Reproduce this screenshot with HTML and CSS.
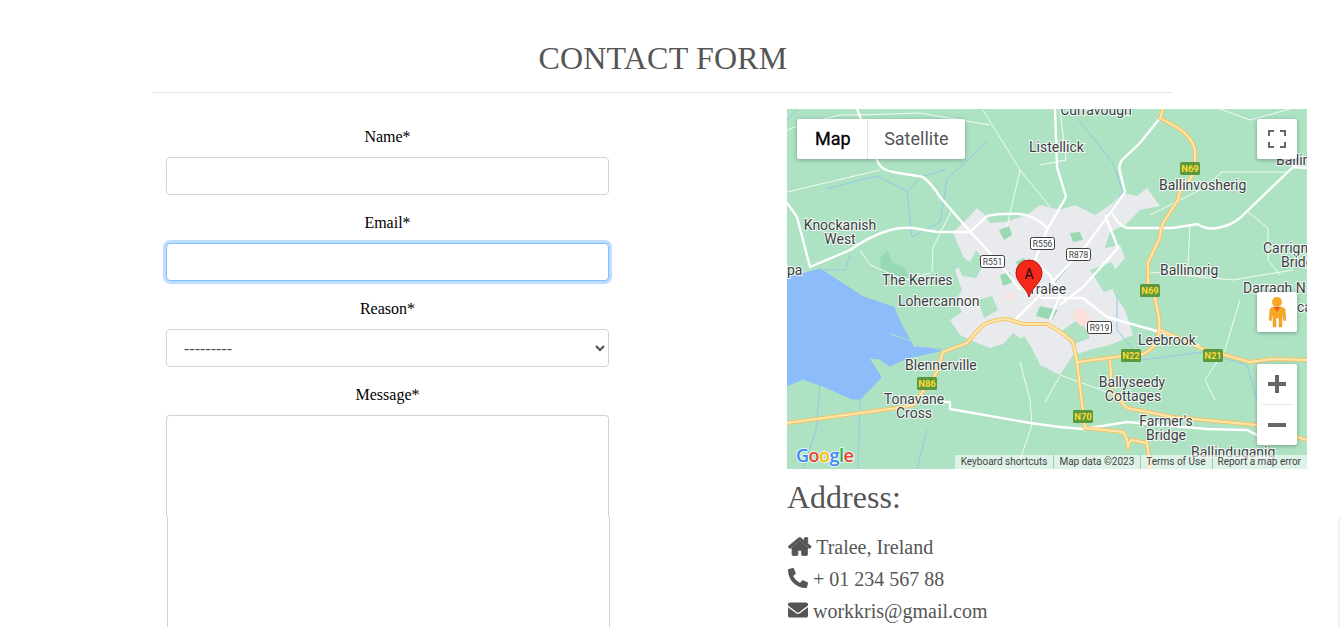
FILE: index.html
```html
<!DOCTYPE html>
<html lang="en">
<head>
    <meta charset="UTF-8">
    <meta name="viewport" content="width=device-width, initial-scale=1.0">
    <title>Contact Form</title>
    <link rel="stylesheet" href="styles.css">
</head>
<body>
    <div class="page">
        <header class="title-block">
            <h1>CONTACT FORM</h1>
        </header>
        <div class="contact-row">
            <form class="contact-form">
                <label for="name">Name*</label>
                <input type="text" id="name" class="field">
                <label for="email">Email*</label>
                <input type="email" id="email" class="field field-focus">
                <label for="reason">Reason*</label>
                <select id="reason" class="field field-select">
                    <option>---------</option>
                </select>
                <label for="message">Message*</label>
                <textarea id="message" class="field field-message"></textarea>
                <div class="message-rest"></div>
            </form>
            <div class="contact-info">
                <div class="map">
                    <svg class="map-canvas" viewBox="787 109 520 360" width="520" height="360">
                        <rect x="787" y="109" width="520" height="360" fill="#ade2c3"/>
                        <!-- town -->
                        <path class="town" d="M953 232L966 220L977 208L984 214L990 223L1005 222L1027 215L1040 205L1060 210L1075 205L1095 215L1110 205L1123 193L1137 196L1147 188L1160 206L1140 210L1125 225L1110 232L1105 248L1120 245L1125 258L1108 278L1115 295L1125 310L1133 335L1110 345L1090 350L1073 355L1060 375L1040 365L1030 345L1013 333L1003 344L990 348L975 342L960 335L950 320L962 312L956 300L962 290L955 270L966 262L958 245Z"/>
                        <path class="park" d="M880 258L888 250L892 262L905 268L908 276L890 278L881 272Z"/>
                        <path class="park" d="M999 230L1009 226L1012 235L1004 240Z"/>
                        <path class="park" d="M1070 233L1080 232L1083 240L1073 242Z"/>
                        <path class="park" d="M1016 262L1024 258L1030 268L1020 272Z"/>
                        <path class="park" d="M1040 306L1058 310L1052 320L1036 316Z"/>
                        <path class="park" d="M1000 275L1010 272L1013 282L1003 286Z"/>
                        <path class="gap" d="M953 250L970 262L976 250L985 262L976 278L962 276ZM978 300L992 296L998 310L984 318ZM1090 270L1112 262L1122 285L1104 292ZM1012 345L1024 336L1030 345L1040 365L1020 352ZM1080 318L1060 332L1072 345L1090 338Z"/>
                        <path class="pink" d="M1073 311L1083 307L1092 320L1082 327L1074 320Z"/>
                        <path class="pink" d="M1005 292L1014 294L1012 300L1006 298Z"/>
                        <!-- water -->
                        <path class="water" d="M787 279L820 270L843 285L863 298L893 308L902 328L913 348L940 350L907 357L890 365L880 358L867 357L880 377L860 398L852 398L823 385L803 378L787 385Z"/>
                        <path class="sandbar" d="M890 334L940 350"/>
                        <!-- rivers -->
                        <path class="river" d="M826 189L877 176L907 191L912 237L940 222L947 179L988 141M908 191L920 177L945 170M1077 118L1113 163L1123 192L1083 250L1040 300M860 400L858 469M820 385L816 430L803 469M927 430L917 469M1117 295L1117 330L1142 360L1203 352L1247 365L1257 400M787 120L797 110M850 255L845 270L820 270"/>
                        <!-- small roads -->
                        <path class="road-small" d="M983 110L1020 170L1050 207M787 192L880 170M1020 170L1007 227M952 210L933 247L932 273M787 130L800 125L840 115L857 115L920 113L990 125M1222 172L1287 172M1248 212L1268 228L1268 260L1280 275M1190 225L1188 265M1150 272L1233 280L1293 270M1020 362L1030 400L1032 425L1020 460M1222 172L1200 190L1180 200L1150 215M1060 109L1066 160L1040 165M1240 300L1225 350M1215 400L1205 380L1225 350M1115 395L1060 375M860 250L870 265L905 280L930 273M1045 402L1060 376M1290 109L1250 120L1220 109"/>
                        <!-- main roads -->
                        <path class="road" d="M857 109L877 160Q880 170 893 172L923 177Q932 184 940 197L967 228L987 250L1005 270L1020 290M787 203L797 217L810 267L850 250Q870 236 890 230Q902 227 913 228L937 232L970 232L987 216Q1000 213 1020 214Q1036 216 1047 228M1055 109L1057 167L1066 197L1047 230L1035 260M1125 192L1083 250L1040 295L1015 320M1160 118L1140 143L1122 160Q1118 166 1120 172L1125 192M1112 213Q1118 225 1127 228L1173 228L1197 224Q1207 230 1217 228Q1230 226 1240 218L1293 167L1307 168M1105 215L1118 248L1083 287L1060 305M1040 298L1083 298L1107 317L1160 332L1200 346M943 402L950 402L950 409L1030 423L1060 427L1083 429L1127 422L1207 429L1247 430L1267 440M1035 262L1050 275L1060 295L1050 320"/>
                        <!-- motorways -->
                        <g fill="none" stroke-linejoin="round">
                            <path class="motorway-edge" d="M1163 109L1160 118L1178 128Q1192 137 1195 150L1195 170Q1190 182 1180 190L1178 200Q1170 212 1163 223Q1160 230 1160 237L1148 263L1148 283Q1153 290 1155 298L1159 318Q1160 332 1157 342Q1150 352 1140 355L1123 356L1078 362M1160 330L1203 349L1250 362L1273 359L1307 360M787 423L897 408L913 405L937 372L943 352L967 343Q975 333 983 325Q995 319 1007 319L1023 324L1047 324Q1062 332 1073 342L1077 362L1085 428L1123 432Q1128 438 1128 448Q1128 442 1132 440L1147 443L1150 465L1150 469M1110 360L1112 392L1127 408L1173 417L1257 425L1307 440"/>
                            <path class="motorway" d="M1163 109L1160 118L1178 128Q1192 137 1195 150L1195 170Q1190 182 1180 190L1178 200Q1170 212 1163 223Q1160 230 1160 237L1148 263L1148 283Q1153 290 1155 298L1159 318Q1160 332 1157 342Q1150 352 1140 355L1123 356L1078 362M1160 330L1203 349L1250 362L1273 359L1307 360M787 423L897 408L913 405L937 372L943 352L967 343Q975 333 983 325Q995 319 1007 319L1023 324L1047 324Q1062 332 1073 342L1077 362L1085 428L1123 432Q1128 438 1128 448Q1128 442 1132 440L1147 443L1150 465L1150 469M1110 360L1112 392L1127 408L1173 417L1257 425L1307 440"/>
                        </g>
                        <!-- place names -->
                        <g class="places">
                            <text x="1096" y="115" text-anchor="middle">Curravough</text>
                            <text x="1029" y="152">Listellick</text>
                            <text x="840" y="230" text-anchor="middle">Knockanish</text>
                            <text x="840" y="244" text-anchor="middle">West</text>
                            <text x="1159" y="190">Ballinvosherig</text>
                            <text x="1276" y="165">Ballin</text>
                            <text x="1263" y="253">Carrign</text>
                            <text x="1281" y="267">Bridg</text>
                            <text x="1160" y="275">Ballinorig</text>
                            <text x="1243" y="293">Darragh N</text>
                            <text x="1297" y="312">cal</text>
                            <text x="882" y="285">The Kerries</text>
                            <text x="898" y="306">Lohercannon</text>
                            <text x="787" y="275">pa</text>
                            <text x="1028" y="294">Tralee</text>
                            <text x="905" y="370">Blennerville</text>
                            <text x="914" y="404" text-anchor="middle">Tonavane</text>
                            <text x="914" y="418" text-anchor="middle">Cross</text>
                            <text x="1138" y="345">Leebrook</text>
                            <text x="1132" y="387" text-anchor="middle">Ballyseedy</text>
                            <text x="1133" y="401" text-anchor="middle">Cottages</text>
                            <text x="1166" y="426" text-anchor="middle">Farmer's</text>
                            <text x="1166" y="440" text-anchor="middle">Bridge</text>
                            <text x="1191" y="457">Ballinduganig</text>
                        </g>
                        <!-- road shields -->
                        <g class="shield-white">
                            <rect x="980.5" y="255.5" width="24" height="12" rx="2"/><text x="992.5" y="265">R551</text>
                            <rect x="1030.5" y="237.5" width="24" height="12" rx="2"/><text x="1042.5" y="247">R556</text>
                            <rect x="1066.5" y="248.5" width="24" height="12" rx="2"/><text x="1078.5" y="258">R878</text>
                            <rect x="1087.5" y="321.5" width="24" height="12" rx="2"/><text x="1099.5" y="331">R919</text>
                        </g>
                        <g class="shield-green">
                            <rect x="1180" y="162" width="20" height="13" rx="1.5"/><text x="1190" y="172">N69</text>
                            <rect x="1140" y="284" width="20" height="13" rx="1.5"/><text x="1150" y="294">N69</text>
                            <rect x="1121" y="349" width="20" height="13" rx="1.5"/><text x="1131" y="359">N22</text>
                            <rect x="1203" y="349" width="20" height="13" rx="1.5"/><text x="1213" y="359">N21</text>
                            <rect x="1073" y="410" width="20" height="13" rx="1.5"/><text x="1083" y="420">N70</text>
                            <rect x="917" y="377" width="20" height="13" rx="1.5"/><text x="927" y="387">N86</text>
                        </g>
                        <!-- marker -->
                        <path class="marker" d="M1029 297C1027 288 1016 283 1016 273A13 13 0 0 1 1042 273C1042 283 1031 288 1029 297Z"/>
                        <text class="marker-label" x="1029" y="279">A</text>
                        <!-- logo -->
                        <text class="logo" x="796" y="462"><tspan fill="#4285f4">G</tspan><tspan fill="#ea4335">o</tspan><tspan fill="#fbbc05">o</tspan><tspan fill="#4285f4">g</tspan><tspan fill="#34a853">l</tspan><tspan fill="#ea4335">e</tspan></text>
                    </svg>
                    <div class="map-type">
                        <span class="map-type-btn map-type-active">Map</span>
                        <span class="map-type-btn">Satellite</span>
                    </div>
                    <div class="map-btn map-fullscreen">
                        <svg width="18" height="18" viewBox="0 0 18 18"><path d="M0 6V0h6v2H2v4zM12 0h6v6h-2V2h-4zM18 12v6h-6v-2h4v-4zM6 18H0v-6h2v4h4z" fill="#666"/></svg>
                    </div>
                    <div class="map-btn map-pegman">
                        <svg width="18" height="32" viewBox="0 0 18 32">
                            <circle cx="9" cy="6" r="5" fill="#f9a825"/>
                            <path d="M4 11h10l3 2 1 11-2 1-2-8v14h-3v-9H8v9H5V17l-2 8-2-1 1-11z" fill="#f9a825" stroke="#d98f14" stroke-width=".4"/>
                            <path d="M5.500 11h7L9 16z" fill="#e8622a"/>
                        </svg>
                    </div>
                    <div class="map-zoom">
                        <div class="map-zoom-btn">
                            <svg width="18" height="18" viewBox="0 0 18 18"><path d="M7 0h4v7h7v4h-7v7H7v-7H0V7h7z" fill="#666"/></svg>
                        </div>
                        <div class="map-zoom-line"></div>
                        <div class="map-zoom-btn">
                            <svg width="18" height="18" viewBox="0 0 18 18"><path d="M0 7h18v4H0z" fill="#666"/></svg>
                        </div>
                    </div>
                    <div class="map-attribution">
                        <span>Keyboard shortcuts</span>
                        <span>Map data ©2023</span>
                        <span>Terms of Use</span>
                        <span>Report a map error</span>
                    </div>
                </div>
                <h3>Address:</h3>
                <p class="info-line">
                    <svg class="icon icon-wide" viewBox="-8 -8 592 528"><path d="M288 120L500 300H76Z"/><path d="M280.37 148.26L96 300.11V464a16 16 0 0 0 16 16l112.06-.29a16 16 0 0 0 15.92-16V368a16 16 0 0 1 16-16h64a16 16 0 0 1 16 16v95.64a16 16 0 0 0 16 16.05L464 480a16 16 0 0 0 16-16V300L295.67 148.26a12.19 12.19 0 0 0-15.3 0zM571.6 251.47L488 182.56V44.05a12 12 0 0 0-12-12h-56a12 12 0 0 0-12 12v72.61L318.47 43a48 48 0 0 0-61 0L4.34 251.47a12 12 0 0 0-1.6 16.9l25.5 31A12 12 0 0 0 45.15 301l235.22-193.74a12.19 12.19 0 0 1 15.3 0L530.9 301a12 12 0 0 0 16.9-1.6l25.5-31a12 12 0 0 0-1.7-16.93z"/></svg>
                    Tralee, Ireland
                </p>
                <p class="info-line">
                    <svg class="icon" viewBox="0 0 512 512"><path d="M497.39 361.8l-112-48a24 24 0 0 0-28 6.9l-49.6 60.6A370.66 370.66 0 0 1 130.6 204.11l60.6-49.6a23.94 23.94 0 0 0 6.9-28l-48-112A24.16 24.16 0 0 0 122.6.61l-104 24A24 24 0 0 0 0 48c0 256.5 207.9 464 464 464a24 24 0 0 0 23.4-18.6l24-104a24.29 24.29 0 0 0-14.01-27.6z"/></svg>
                    + 01 234 567 88
                </p>
                <p class="info-line">
                    <svg class="icon" viewBox="0 0 512 512"><path d="M502.3 190.8c3.9-3.1 9.7-.2 9.7 4.7V400c0 26.5-21.5 48-48 48H48c-26.5 0-48-21.5-48-48V195.6c0-5 5.7-7.8 9.7-4.7 22.4 17.4 52.1 39.5 154.1 113.6 21.1 15.4 56.7 47.8 92.2 47.6 35.7.3 72-32.8 92.3-47.6 102-74.1 131.6-96.3 154-113.7zM256 320c23.2.4 56.6-29.2 73.4-41.4 132.7-96.3 142.8-104.7 173.4-128.7 5.8-4.5 9.2-11.5 9.2-18.9v-19c0-26.5-21.5-48-48-48H48C21.5 64 0 85.5 0 112v19c0 7.4 3.4 14.3 9.2 18.9 30.6 23.9 40.7 32.4 173.4 128.7 16.8 12.2 50.2 41.8 73.4 41.4z"/></svg>
                    workkris@gmail.com
                </p>
            </div>
        </div>
        <div class="scroll-edge"></div>
    </div>
</body>
</html>
```

FILE: styles.css
```css
html, body {
    margin: 0;
    padding: 0;
    height: 627px;
    overflow: hidden;
    background-color: #fff;
}

body {
    font-family: "Liberation Serif", "Times New Roman", serif;
    font-size: 16px;
    color: #000;
}

.page {
    position: relative;
    height: 627px;
    padding-left: 152px;
    overflow: hidden;
}

.title-block {
    width: 1020px;
    height: 92px;
    border-bottom: 1px solid #e3e3e3;
    box-sizing: content-box;
}

.title-block h1 {
    margin: 0;
    padding: 38px 0 0 2px;
    font-size: 32px;
    font-weight: 400;
    line-height: 40px;
    letter-spacing: 0.2px;
    text-align: center;
    color: #555;
}

.contact-row {
    display: flex;
    gap: 178px;
    padding-left: 14px;
}

.contact-form {
    width: 443px;
    flex: none;
    padding-top: 32px;
}

.contact-form label {
    display: block;
    height: 24px;
    margin-bottom: 8px;
    line-height: 24px;
    text-align: center;
}

.field {
    display: block;
    width: 100%;
    height: 38px;
    margin: 0 0 16px;
    padding: 6px 12px;
    box-sizing: border-box;
    font-family: inherit;
    font-size: 16px;
    color: #495057;
    background-color: #fff;
    border: 1px solid #ced4da;
    border-radius: 4px;
    outline: none;
}

.field-focus {
    border-color: #80bdff;
    box-shadow: 0 0 0 3px rgba(0, 123, 255, 0.25);
}

.field-select {
    padding-left: 13px;
}

.field-message {
    height: 102px;
    margin: 0;
    border-bottom: none;
    border-radius: 4px 4px 0 0;
    resize: none;
}

.message-rest {
    width: 443px;
    height: 200px;
    margin-left: 1px;
    box-sizing: border-box;
    border: 1px solid #ced4da;
    border-top: none;
}

.contact-info {
    width: 520px;
    flex: none;
    padding-top: 16px;
    color: #555;
}

.map {
    position: relative;
    width: 520px;
    height: 360px;
    overflow: hidden;
}

.map-canvas {
    display: block;
}

.town { fill: #e8eaed; }
.park { fill: #98d9b4; }
.gap { fill: #ade2c3; }
.pink { fill: #fbdfdb; }

.water {
    fill: #8cbcf9;
    stroke: #8cbcf9;
    stroke-width: 3;
    stroke-linejoin: round;
}

.sandbar {
    fill: none;
    stroke: #ade2c3;
    stroke-width: 1;
}

.river {
    fill: none;
    stroke: #93c9e4;
    stroke-width: 1;
}

.road-small {
    fill: none;
    stroke: #fff;
    stroke-width: 1;
    opacity: 0.85;
}

.road {
    fill: none;
    stroke: #fff;
    stroke-width: 2.4;
    stroke-linejoin: round;
}

.motorway-edge {
    stroke: #f8c262;
    stroke-width: 4;
}

.motorway {
    stroke: #fee7b0;
    stroke-width: 2;
}

.places text {
    font-family: Roboto, sans-serif;
    font-size: 14px;
    fill: #3c4043;
    stroke: #fff;
    stroke-width: 2px;
    stroke-opacity: 0.85;
    paint-order: stroke;
}

.shield-white rect {
    fill: #fff;
    stroke: #3c4043;
    stroke-width: 1;
}

.shield-white text {
    font-family: Roboto, sans-serif;
    font-size: 8.500px;
    fill: #3c4043;
    text-anchor: middle;
}

.shield-green rect {
    fill: #5a9a3c;
}

.shield-green text {
    font-family: Roboto, sans-serif;
    font-size: 9.500px;
    font-weight: 700;
    fill: #fdd835;
    text-anchor: middle;
}

.marker {
    fill: #f5281a;
    stroke: #b3170d;
    stroke-width: 1;
}

.marker-label {
    font-family: Roboto, sans-serif;
    font-size: 14px;
    fill: #111;
    text-anchor: middle;
}

.logo {
    font-family: "Open Sans", sans-serif;
    font-size: 18px;
    font-weight: 600;
    letter-spacing: -0.500px;
    stroke: #fff;
    stroke-width: 2px;
    stroke-opacity: 0.7;
    paint-order: stroke;
}

.map-type {
    position: absolute;
    top: 10px;
    left: 10px;
    display: flex;
    height: 40px;
    background-color: #fff;
    border-radius: 2px;
    box-shadow: 0 1px 4px rgba(0, 0, 0, 0.3);
    font-family: Roboto, sans-serif;
    font-size: 18px;
    line-height: 40px;
}

.map-type-btn {
    padding: 0 16.500px 0 16.500px;
    color: #565656;
}

.map-type-active {
    padding: 0 16px 0 18px;
    font-weight: 400;
    color: #000;
    border-right: 1px solid #e6e6e6;
    -webkit-text-stroke: 0.3px #000;
}

.map-btn,
.map-zoom {
    position: absolute;
    left: 470px;
    width: 40px;
    background-color: #fff;
    border-radius: 2px;
    box-shadow: 0 1px 4px rgba(0, 0, 0, 0.3);
}

.map-btn {
    display: flex;
    align-items: center;
    justify-content: center;
    height: 40px;
}

.map-fullscreen { top: 10px; }
.map-pegman { top: 183px; }
.map-zoom { top: 255px; height: 81px; }

.map-zoom-btn {
    display: flex;
    align-items: center;
    justify-content: center;
    height: 40px;
}

.map-zoom-line {
    height: 1px;
    margin: 0 5px;
    background-color: #e6e6e6;
}

.map-attribution {
    position: absolute;
    right: 0;
    bottom: 0;
    display: flex;
    height: 14px;
    background-color: rgba(255, 255, 255, 0.6);
    font-family: Roboto, sans-serif;
    font-size: 10px;
    line-height: 14px;
    color: #444;
}

.map-attribution span {
    padding: 0 6px 0 5px;
    border-left: 1px solid rgba(120, 180, 150, 0.6);
    white-space: nowrap;
}

.map-attribution span:first-child {
    border-left-color: transparent;
}

.contact-info h3 {
    margin: 9px 0 15px;
    font-size: 32px;
    font-weight: 400;
    line-height: 38px;
}

.info-line {
    height: 32px;
    margin: 0;
    padding-left: 1px;
    font-size: 20px;
    line-height: 32px;
    white-space: nowrap;
}

.icon {
    width: 20px;
    height: 20px;
    vertical-align: -2px;
    fill: #555;
}

.icon-wide {
    width: 23.500px;
    height: 21px;
    vertical-align: -3px;
    stroke: #555;
    stroke-width: 22;
}

.scroll-edge {
    position: absolute;
    top: 518px;
    right: 0;
    width: 2px;
    bottom: 0;
    background-color: #f1f1f1;
}
```
